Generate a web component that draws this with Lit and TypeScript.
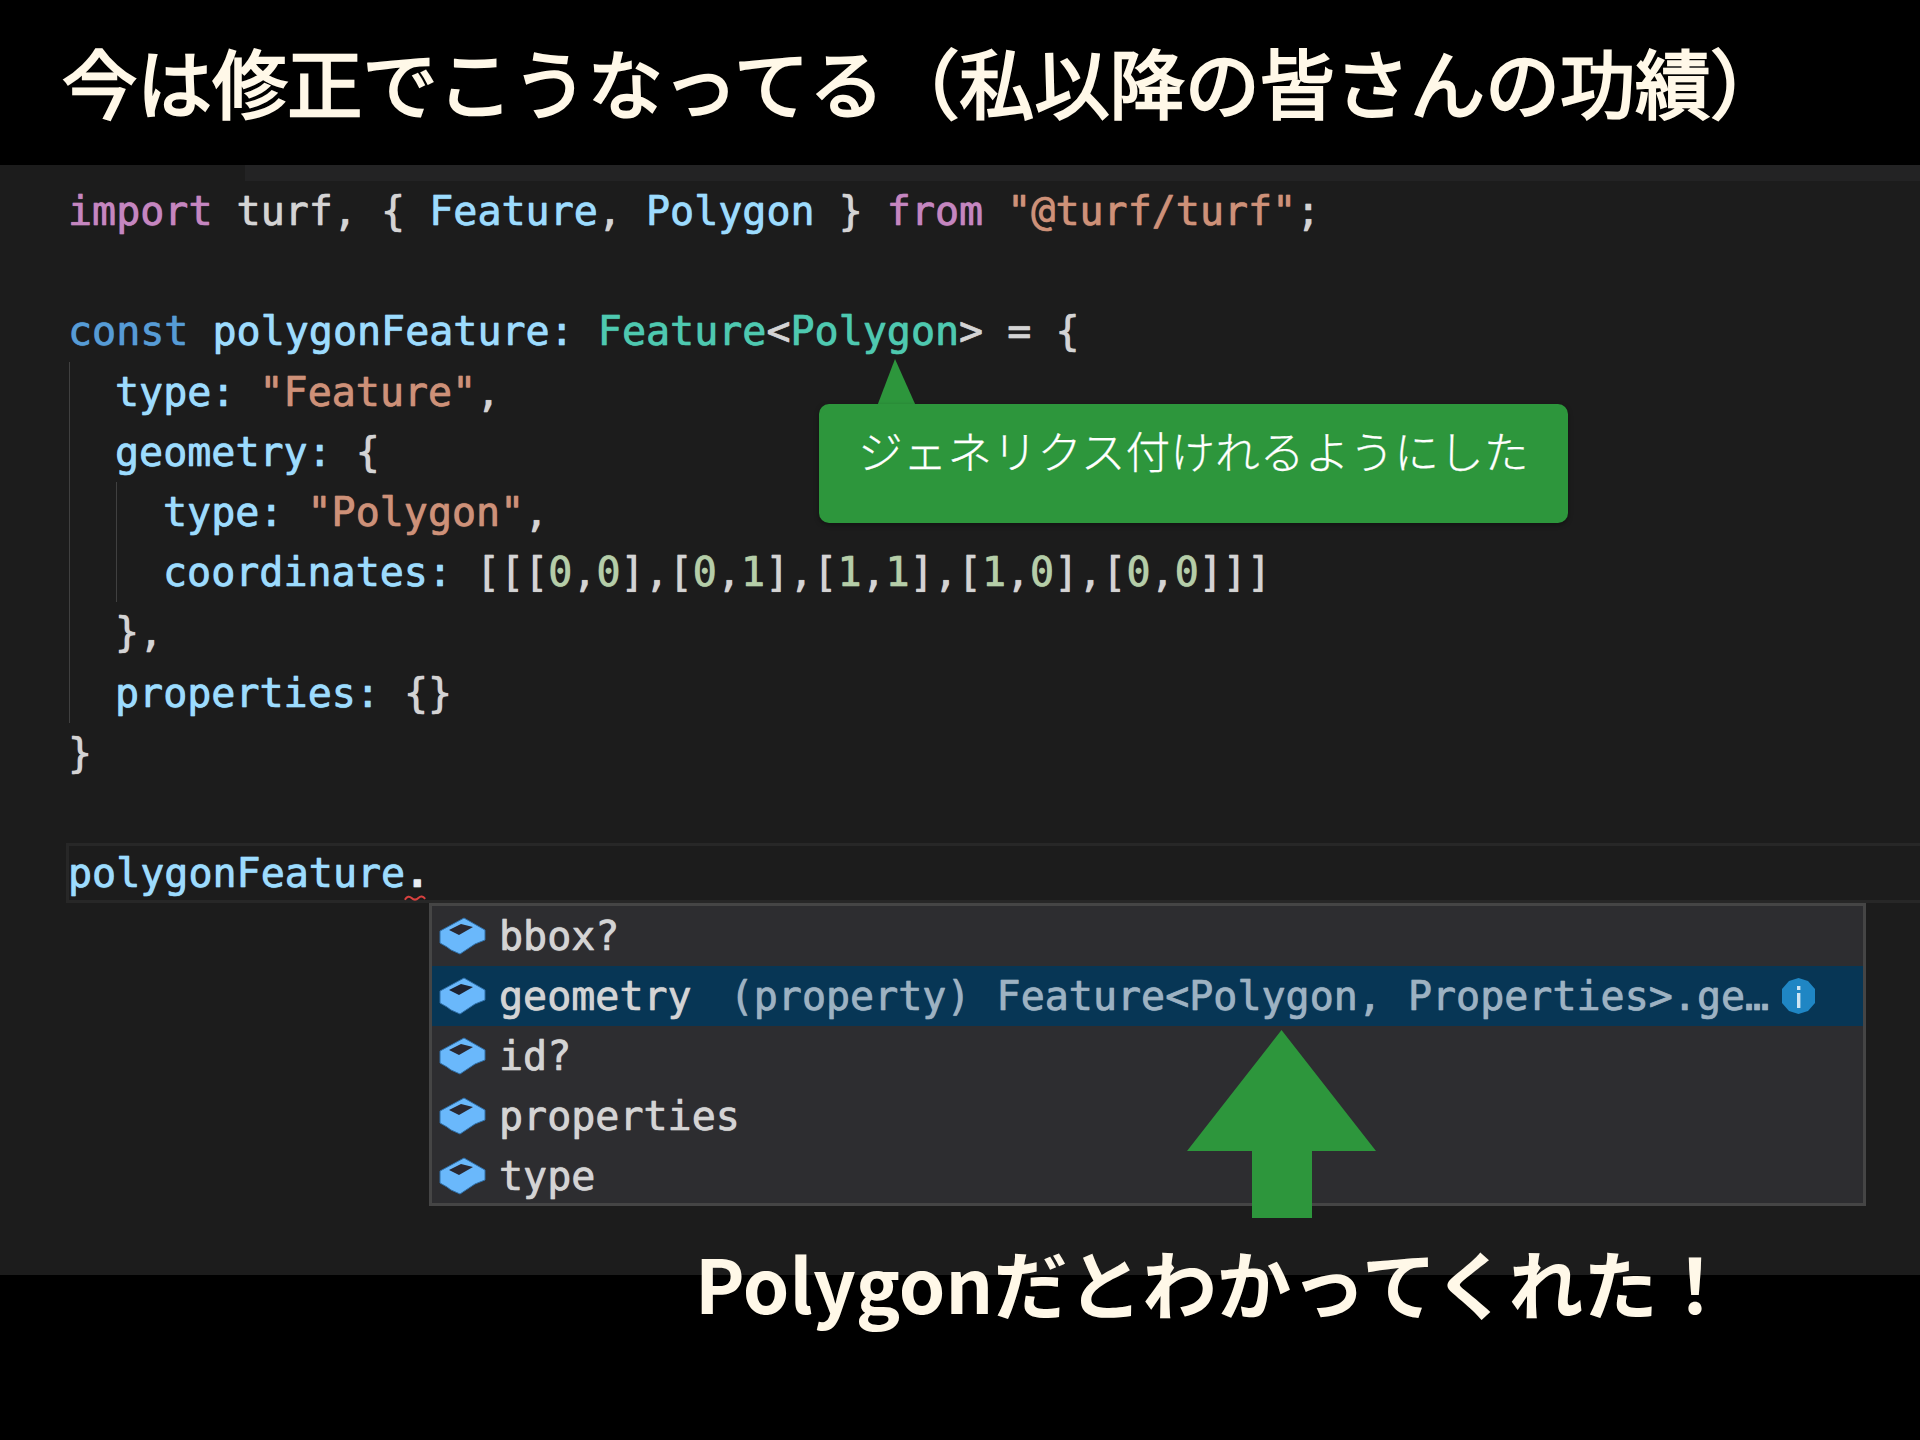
import { LitElement, html, css, svg } from "lit";
import { customElement } from "lit/decorators.js";

const boxIcon = html`<svg class="box" viewBox="-1 -1 47 38" aria-hidden="true">
  <path d="M24 0 L45 12 V22 L35 26 L29 30 L20 36 L11 32 L7 29 L0 25 V13 Z" fill="#6ab8fb" stroke="#2f6fa8" stroke-width="1"/>
  <path class="hole" d="M9 12 L21 6 L33 9 L19 17 Z" fill="#2a2830"/>
</svg>`;

@customElement("app-root")
export class AppRoot extends LitElement {
  static styles = css`
    :host {
      display: block;
      width: 1920px;
      height: 1440px;
      background: #000;
      overflow: hidden;
    }
    .slide {
      position: relative;
      width: 1920px;
      height: 1440px;
      background: #000;
      font-family: "DejaVu Sans Mono", "Liberation Mono", monospace;
    }
    .title {
      height: 165px;
      box-sizing: border-box;
      padding-left: 62px;
      line-height: 161px;
      font-family: "Noto Sans CJK JP", "Noto Sans", sans-serif;
      font-size: 75.1px;
      font-weight: 400;
      -webkit-text-stroke: 2.4px #fff8e8;
      color: #fff8e8;
      white-space: nowrap;
    }
    .panel {
      height: 1110px;
      background: #1c1c1c;
      color: #d4d4d4;
      font-size: 40px;
      line-height: 60.2px;
      text-shadow: 0 0 1px currentColor;
      -webkit-text-stroke: 0.5px currentColor;
    }
    .strip {
      height: 16px;
      margin-left: 245px;
      background: #232324;
    }
    .line {
      height: 60.2px;
      padding-left: 68px;
      white-space: pre;
    }
    .block {
      margin-left: 69px;
      border-left: 1px solid #404040;
    }
    .block > .line {
      padding-left: 45px;
    }
    .inner {
      margin-left: 46px;
      border-left: 1px solid #404040;
    }
    .block > .inner > .line {
      padding-left: 46px;
    }
    .current {
      position: relative;
      margin-left: 66px;
      padding-left: 2px;
      box-shadow: inset 0 3px 0 #272727, inset 0 -3px 0 #272727, inset 3px 0 0 #272727;
    }
    .squiggle {
      position: absolute;
      left: 338px;
      top: 50px;
      width: 22px;
      height: 10px;
    }
    .kw { color: #c586c0; }
    .st { color: #569cd6; }
    .v { color: #9cdcfe; }
    .ty { color: #4ec9b0; }
    .str { color: #ce9178; }
    .num { color: #b5cea8; }
    .dot { color: #e8eef4; font-weight: 700; }
    .menu {
      box-sizing: border-box;
      width: 1437px;
      height: 303px;
      margin-left: 429px;
      background: #2d2d30;
      border: 3px solid #454545;
      overflow: hidden;
    }
    .item {
      display: flex;
      align-items: center;
      height: 60px;
      padding-left: 7px;
      color: #d4d4d4;
      white-space: pre;
    }
    .item.sel {
      background: #073655;
    }
    .box {
      width: 47px;
      height: 38px;
      margin-right: 13px;
      flex: none;
    }
    .sel .hole { fill: #1d2230; }
    .detail {
      margin-left: 38px;
      width: 1035px;
      flex: none;
      color: #9db2c2;
      word-spacing: 2px;
    }
    .info {
      width: 35px;
      height: 36px;
      margin-left: 16px;
      flex: none;
    }
    .caption {
      position: relative;
      margin-top: -43px;
      padding-left: 695px;
      line-height: 100px;
      font-family: "Noto Sans CJK JP", "Noto Sans", sans-serif;
      font-size: 74.5px;
      font-weight: 700;
      color: #fff8e8;
      white-space: nowrap;
    }
    .callout {
      position: absolute;
      left: 819px;
      top: 404px;
      width: 749px;
      height: 119px;
      box-sizing: border-box;
      padding: 13px 0 0 39px;
      background: #2d963c;
      border-radius: 10px;
      color: #fff;
      font-family: "Noto Sans CJK JP", "Noto Sans", sans-serif;
      font-size: 44.8px;
      font-weight: 300;
      -webkit-text-stroke: 0.25px #fff;
      line-height: 66px;
      white-space: nowrap;
      box-shadow: 0 2px 5px rgba(0, 0, 0, 0.35);
    }
    .tip {
      position: absolute;
      left: 877px;
      top: 359px;
      width: 39px;
      height: 46px;
    }
    .arrow {
      position: absolute;
      left: 1187px;
      top: 1030px;
      width: 189px;
      height: 188px;
    }
  `;

  render() {
    return html`<div class="slide">
      <div class="title">今は修正でこうなってる（私以降の皆さんの功績）</div>
      <div class="panel">
        <div class="strip"></div>
        <div class="line"><span class="kw">import</span> turf, { <span class="v">Feature</span>, <span class="v">Polygon</span> } <span class="kw">from</span> <span class="str">"@turf/turf"</span>;</div>
        <div class="line"></div>
        <div class="line"><span class="st">const</span> <span class="v">polygonFeature</span><span class="v">:</span> <span class="ty">Feature</span>&lt;<span class="ty">Polygon</span>&gt; = {</div>
        <div class="block">
          <div class="line"><span class="v">type:</span> <span class="str">"Feature"</span>,</div>
          <div class="line"><span class="v">geometry:</span> {</div>
          <div class="inner">
            <div class="line"><span class="v">type:</span> <span class="str">"Polygon"</span>,</div>
            <div class="line"><span class="v">coordinates:</span> [[[<span class="num">0</span>,<span class="num">0</span>],[<span class="num">0</span>,<span class="num">1</span>],[<span class="num">1</span>,<span class="num">1</span>],[<span class="num">1</span>,<span class="num">0</span>],[<span class="num">0</span>,<span class="num">0</span>]]]</div>
          </div>
          <div class="line">},</div>
          <div class="line"><span class="v">properties:</span> {}</div>
        </div>
        <div class="line">}</div>
        <div class="line"></div>
        <div class="line current"><span class="v">polygonFeature</span><span class="dot">.</span><svg class="squiggle" viewBox="0 0 26 10" aria-hidden="true"><path d="M1 7 Q5 1 9 5 T17 5 T25 6" fill="none" stroke="#d8413f" stroke-width="2.4"/></svg></div>
        <div class="menu">
          <div class="item">${boxIcon}<span>bbox?</span></div>
          <div class="item sel">${boxIcon}<span>geometry</span><span class="detail">(property) Feature&lt;Polygon, Properties&gt;.ge…</span><svg class="info" viewBox="0 0 35 36" aria-hidden="true">
              <path d="M17.5 0 L27 3 L34 11 V25 L27 33 L17.5 36 L8 33 L1 25 V11 L8 3 Z" fill="#1f86c4"/>
              ${svg`<rect x="16" y="15" width="3.4" height="15" fill="#cfe6f4"/><rect x="16" y="8" width="3.4" height="4" fill="#cfe6f4"/>`}
            </svg></div>
          <div class="item">${boxIcon}<span>id?</span></div>
          <div class="item">${boxIcon}<span>properties</span></div>
          <div class="item">${boxIcon}<span>type</span></div>
        </div>
      </div>
      <div class="caption">Polygonだとわかってくれた！</div>

      <svg class="tip" viewBox="0 0 39 46" aria-hidden="true"><path d="M18 0 L0.5 46 H38.5 Z" fill="#2d963c"/></svg>
      <div class="callout">ジェネリクス付けれるようにした</div>
      <svg class="arrow" viewBox="0 0 189 188" aria-hidden="true">
        <path d="M94.5 0 L189 121 H125 V188 H65 V121 H0 Z" fill="#2d963c"/>
      </svg>
    </div>`;
  }
}
